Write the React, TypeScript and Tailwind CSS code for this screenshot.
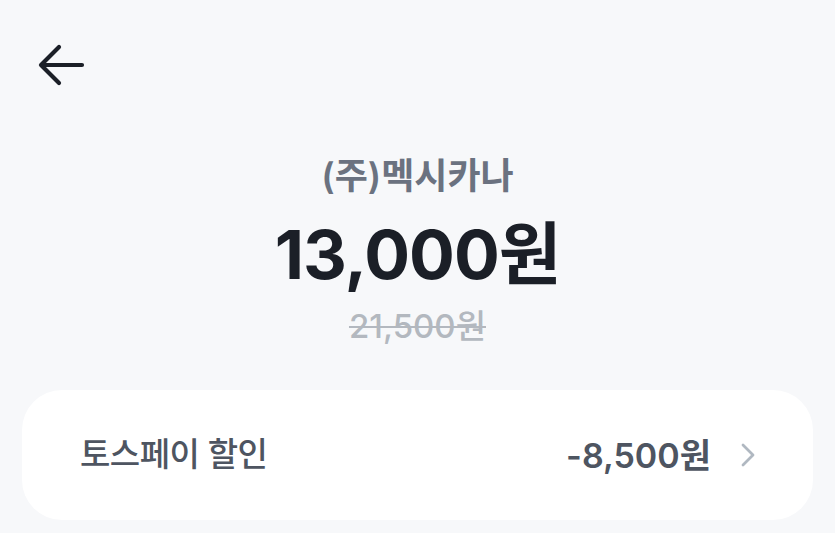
export default function App() {
  return (
    <div
      className="w-[835px] h-[533px] bg-[#f7f8fa] overflow-hidden flex flex-col"
      style={{ fontFamily: 'Inter, "Noto Sans CJK KR", sans-serif' }}
    >
      {/* header */}
      <div className="pl-[37px] pt-[43px] h-[130px]">
        <svg width="48" height="44" viewBox="0 0 48 44" fill="none">
          <path
            d="M45 22H5M22 4L4 22l18 18"
            stroke="#1b1f27"
            strokeWidth="4.2"
            strokeLinecap="round"
            strokeLinejoin="round"
          />
        </svg>
      </div>

      {/* amount */}
      <div className="flex flex-col items-center">
        <div className="text-[36px] leading-[44px] font-semibold text-[#6b7280] mt-[24px]">
          (주)멕시카나
        </div>
        <div className="text-[68px] leading-[80px] font-bold text-[#1b1f27] tracking-[-1px] mt-[16px]">
          13,000원
        </div>
        <div className="text-[33px] leading-[40px] font-medium text-[#b3b8bf] line-through decoration-[2px] mt-[12px]">
          21,500원
        </div>
      </div>

      {/* discount card */}
      <div className="mx-[22px] mt-[44px] h-[130px] bg-white rounded-[40px] flex items-center pl-[58px] pr-[56px]">
        <div className="text-[33px] font-medium text-[#4e5561] tracking-[-0.5px] flex-1">
          토스페이 할인
        </div>
        <div className="text-[34px] font-semibold text-[#4e5561]">
          -8,500원
        </div>
        <svg className="ml-[28px]" width="18" height="26" viewBox="0 0 18 26" fill="none">
          <path
            d="M4 3l10 10-10 10"
            stroke="#b0b8c1"
            strokeWidth="2.8"
            strokeLinecap="round"
            strokeLinejoin="round"
          />
        </svg>
      </div>
    </div>
  );
}
